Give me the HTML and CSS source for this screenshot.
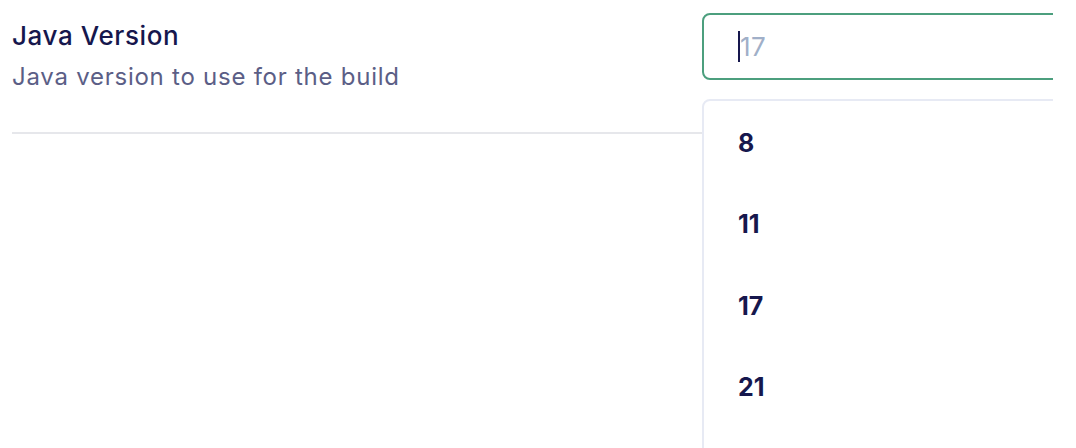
FILE: index.html
```html
<!DOCTYPE html>
<html>
<head>
<meta charset="utf-8">
<link rel="stylesheet" href="styles.css">
</head>
<body>
<div class="page">
  <div class="row">
    <div class="info">
      <div class="title">Java Version</div>
      <div class="desc">Java version to use for the build</div>
    </div>
    <div class="field">
      <div class="input"><span class="caret"></span><span class="placeholder">17</span></div>
    </div>
  </div>
  <ul class="menu">
    <li class="item">8</li>
    <li class="item">11</li>
    <li class="item">17</li>
    <li class="item">21</li>
  </ul>
</div>
</body>
</html>
```
FILE: styles.css
```css
html, body {
  margin: 0;
  padding: 0;
  background: #ffffff;
}
body {
  font-family: Inter, "Noto Sans", sans-serif;
}
.page {
  position: relative;
  width: 1053px;
  height: 448px;
  overflow: hidden;
}
.row {
  display: flex;
  padding-left: 12px;
}
.info {
  flex: 0 0 690px;
  height: 134px;
  box-sizing: border-box;
  border-bottom: 2px solid #e6e7eb;
  padding-top: 20px;
}
.title {
  font-size: 26px;
  font-weight: 500;
  color: #16174d;
  line-height: 32px;
  letter-spacing: 0.6px;
}
.desc {
  font-size: 24px;
  color: #5b5e86;
  line-height: 30px;
  margin-top: 10px;
  letter-spacing: 0.75px;
}
.field {
  flex: 0 0 auto;
  padding-top: 13px;
}
.input {
  width: 420px;
  height: 67px;
  box-sizing: border-box;
  border: 2px solid #4c9f7e;
  border-radius: 8px;
  display: flex;
  align-items: center;
  padding-left: 34px;
}
.caret {
  width: 2px;
  height: 31px;
  background: #16174d;
  margin-top: -1px;
}
.placeholder {
  font-size: 26px;
  color: #a0afc8;
  line-height: 1;
  letter-spacing: 0.3px;
}
.menu {
  position: absolute;
  left: 702px;
  top: 99px;
  width: 420px;
  height: 420px;
  margin: 0;
  padding: 0;
  list-style: none;
  box-sizing: border-box;
  border: 2px solid #e7eaf4;
  border-radius: 8px;
  padding-top: 1px;
}
.item {
  height: 81.5px;
  display: flex;
  align-items: center;
  padding-left: 34px;
  font-size: 25px;
  font-weight: 700;
  color: #16174d;
}
```
